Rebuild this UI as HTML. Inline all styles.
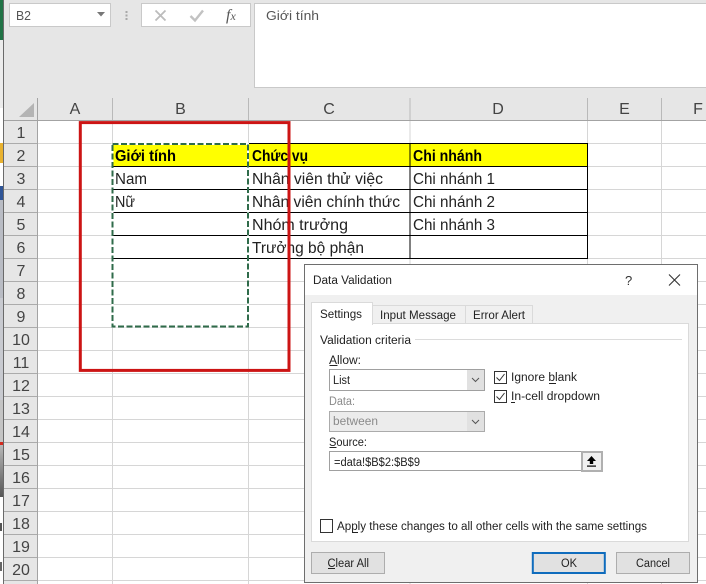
<!DOCTYPE html>
<html><head><meta charset="utf-8"><style>
html,body{margin:0;padding:0;background:#fff}
svg{display:block}
text{font-family:"Liberation Sans",sans-serif;white-space:pre}
.c{font-size:15.5px;fill:#222}
.b{font-size:15.5px;font-weight:bold;fill:#000}
.h{font-size:16px;fill:#444;text-anchor:middle}
.d{font-size:11.5px;fill:#222}
.g{font-size:11.5px;fill:#8a8a8a}
</style></head><body>
<svg width="706" height="584" viewBox="0 0 706 584" xmlns="http://www.w3.org/2000/svg">
<defs><linearGradient id="lg" x1="0" y1="0" x2="0" y2="1"><stop offset="0" stop-color="#b8b8b8"/><stop offset="1" stop-color="#555"/></linearGradient></defs>
<rect width="706" height="584" fill="#fff"/>
<!-- left strip -->
<rect x="0" y="0" width="3" height="40" fill="#217346"/>
<rect x="0" y="40" width="3" height="68" fill="#ececec"/>
<rect x="0" y="108" width="3" height="12" fill="#fff"/>
<rect x="0" y="143" width="3" height="20" fill="#e9b22f"/>
<rect x="0" y="186" width="3" height="14" fill="#2f5597"/>
<rect x="0" y="200" width="3" height="98" fill="#b9bcc4"/>
<rect x="0" y="298" width="3" height="102" fill="#c8cad0"/>
<rect x="0" y="400" width="3" height="42" fill="#c4c4c4"/>
<rect x="0" y="442" width="3" height="3" fill="#d42a1e"/>
<rect x="0" y="445" width="3" height="52" fill="url(#lg)"/>
<rect x="0" y="523" width="2" height="8" fill="#555"/>
<rect x="0" y="562" width="2" height="9" fill="#666"/>
<rect x="3" y="0" width="1" height="584" fill="#6a6a6a"/>
<!-- top ribbon -->
<rect x="4" y="0" width="702" height="120" fill="#e6e6e6"/>
<rect x="9.5" y="3.5" width="101" height="23" fill="#fff" stroke="#c9c9c9"/>
<text x="16" y="20" font-size="12.5" fill="#555" textLength="15" lengthAdjust="spacingAndGlyphs">B2</text>
<path d="M97 12h8l-4 4.5z" fill="#777"/>
<g fill="#a8a8a8"><rect x="125.500" y="11" width="2" height="2"/><rect x="125.500" y="14.500" width="2" height="2"/><rect x="125.500" y="18" width="2" height="2"/></g>
<rect x="141.500" y="3.500" width="109" height="23" fill="#fff" stroke="#c9c9c9"/>
<path d="M155.500 10.500l10 10M165.500 10.500l-10 10" stroke="#bcbcbc" stroke-width="1.800" fill="none"/>
<path d="M190.500 16l4.500 4.500 8-10" stroke="#c2c2c2" stroke-width="2.400" fill="none"/>
<text x="226" y="20" font-size="16" font-style="italic" fill="#555" style="font-family:'Liberation Serif',serif">f<tspan font-size="12">x</tspan></text>
<rect x="254.500" y="3.500" width="460" height="84" fill="#fff" stroke="#c9c9c9"/>
<text x="266" y="20" font-size="12.500" fill="#555" textLength="53" lengthAdjust="spacingAndGlyphs">Giới tính</text>
<!-- corner -->
<path d="M19 117h15v-14z" fill="#b4b4b4"/>
<!-- column header -->
<g stroke="#b9b9b9"><path d="M37.500 98v22M112.500 98v22M248.500 98v22M410 98v22M587.500 98v22M661.500 98v22"/></g>
<rect x="4" y="120" width="702" height="1" fill="#a3a3a3"/>
<text class="h" x="75" y="114">A</text><text class="h" x="180.500" y="114">B</text><text class="h" x="329" y="114">C</text><text class="h" x="498" y="114">D</text><text class="h" x="624.500" y="114">E</text><text class="h" x="698" y="114">F</text>
<!-- row header -->
<rect x="4" y="121" width="33" height="463" fill="#e6e6e6"/>
<rect x="37" y="98" width="1" height="486" fill="#a3a3a3"/>
<g stroke="#ababab"><path d="M4 143.500h33M4 166.500h33M4 189.500h33M4 212.500h33M4 235.500h33M4 258.500h33M4 281.500h33M4 304.500h33M4 327.500h33M4 350.500h33M4 373.500h33M4 396.500h33M4 419.500h33M4 442.500h33M4 465.500h33M4 488.500h33M4 511.500h33M4 534.500h33M4 557.500h33M4 580.500h33"/></g>
<g><text class="h" x="21" y="138">1</text><text class="h" x="21" y="161">2</text><text class="h" x="21" y="184">3</text><text class="h" x="21" y="207">4</text><text class="h" x="21" y="230">5</text><text class="h" x="21" y="253">6</text><text class="h" x="21" y="276">7</text><text class="h" x="21" y="299">8</text><text class="h" x="21" y="322">9</text><text class="h" x="21" y="345">10</text><text class="h" x="21" y="368">11</text><text class="h" x="21" y="391">12</text><text class="h" x="21" y="414">13</text><text class="h" x="21" y="437">14</text><text class="h" x="21" y="460">15</text><text class="h" x="21" y="483">16</text><text class="h" x="21" y="506">17</text><text class="h" x="21" y="529">18</text><text class="h" x="21" y="552">19</text><text class="h" x="21" y="575">20</text></g>
<!-- grid -->
<g stroke="#d6d6d6"><path d="M112.500 121v463M248.500 121v463M410 121v463M587.500 121v463M661.500 121v463"/>
<path d="M38 143.500h668M38 166.500h668M38 189.500h668M38 212.500h668M38 235.500h668M38 258.500h668M38 281.500h668M38 304.500h668M38 327.500h668M38 350.500h668M38 373.500h668M38 396.500h668M38 419.500h668M38 442.500h668M38 465.500h668M38 488.500h668M38 511.500h668M38 534.500h668M38 557.500h668M38 580.500h668"/></g>
<!-- table -->
<rect x="112" y="143" width="476" height="23" fill="#ffff00"/>
<g stroke="#000" stroke-width="1" fill="none"><path d="M112 143.500h476M112 166.500h476M112 189.500h476M112 212.500h476M112 235.500h476M112 258.500h476M112.500 143v116M248.500 143v116M410 143v116M587.500 143v116"/></g>
<text class="b" x="115" y="161" textLength="61" lengthAdjust="spacingAndGlyphs">Giới tính</text>
<text class="b" x="252" y="161" textLength="56" lengthAdjust="spacingAndGlyphs">Chức vụ</text>
<text class="b" x="413" y="161" textLength="69" lengthAdjust="spacingAndGlyphs">Chi nhánh</text>
<text class="c" x="115" y="184" textLength="32" lengthAdjust="spacingAndGlyphs">Nam</text>
<text class="c" x="115" y="207" textLength="20" lengthAdjust="spacingAndGlyphs">Nữ</text>
<text class="c" x="252" y="184" textLength="131" lengthAdjust="spacingAndGlyphs">Nhân viên thử việc</text>
<text class="c" x="252" y="207" textLength="148" lengthAdjust="spacingAndGlyphs">Nhân viên chính thức</text>
<text class="c" x="252" y="230" textLength="96" lengthAdjust="spacingAndGlyphs">Nhóm trưởng</text>
<text class="c" x="252" y="253" textLength="112" lengthAdjust="spacingAndGlyphs">Trưởng bộ phận</text>
<text class="c" x="413" y="184" textLength="82" lengthAdjust="spacingAndGlyphs">Chi nhánh 1</text>
<text class="c" x="413" y="207" textLength="82" lengthAdjust="spacingAndGlyphs">Chi nhánh 2</text>
<text class="c" x="413" y="230" textLength="82" lengthAdjust="spacingAndGlyphs">Chi nhánh 3</text>
<!-- marching ants -->
<rect x="112.500" y="144" width="135.500" height="182.500" fill="none" stroke="#fff" stroke-width="2"/>
<rect x="112.500" y="144" width="135.500" height="182.500" fill="none" stroke="#2f6b4a" stroke-width="2" stroke-dasharray="6 2.500"/>
<!-- red box -->
<rect x="80.300" y="122.600" width="208.700" height="247.800" fill="none" stroke="#cc1414" stroke-width="3"/>
<!-- dialog -->
<rect x="304.500" y="264.500" width="393" height="318" fill="#f0f0f0" stroke="#6e6e6e"/>
<rect x="305" y="265" width="392" height="30" fill="#fff"/>
<text class="d" x="313" y="284" textLength="79" lengthAdjust="spacingAndGlyphs">Data Validation</text>
<text x="625" y="285" font-size="13" fill="#333">?</text>
<path d="M669 274.500l11 11M680 274.500l-11 11" stroke="#333" stroke-width="1.100" fill="none"/>
<!-- tabs -->
<rect x="372.500" y="305.500" width="93" height="19" fill="#f0f0f0" stroke="#dadada"/>
<rect x="465.500" y="305.500" width="67" height="19" fill="#f0f0f0" stroke="#dadada"/>
<rect x="311.500" y="323.500" width="377" height="218" fill="#fff" stroke="#dadada"/>
<rect x="311.500" y="302.500" width="61" height="22" fill="#fff" stroke="#dadada"/>
<rect x="312" y="322" width="60" height="3" fill="#fff"/>
<text class="d" x="320" y="318" textLength="42" lengthAdjust="spacingAndGlyphs">Settings</text>
<text class="d" x="380" y="319" textLength="76" lengthAdjust="spacingAndGlyphs">Input Message</text>
<text class="d" x="473" y="319" textLength="52" lengthAdjust="spacingAndGlyphs">Error Alert</text>
<text class="d" x="320" y="344" textLength="91" lengthAdjust="spacingAndGlyphs">Validation criteria</text>
<path d="M415 339.500h267" stroke="#dcdcdc"/>
<!-- allow -->
<text class="d" x="329" y="364" textLength="32" lengthAdjust="spacingAndGlyphs">Allow:</text>
<path d="M329.500 365.500h8" stroke="#222"/>
<rect x="329.500" y="369.500" width="155" height="21" fill="#fff" stroke="#a0a0a0"/>
<rect x="467" y="370" width="17" height="20" fill="#e1e1e1"/>
<path d="M472 378l3.500 3.500 3.500-3.500" stroke="#555" fill="none"/>
<text class="d" x="333" y="384" textLength="17" lengthAdjust="spacingAndGlyphs">List</text>
<!-- data -->
<text class="g" x="329" y="405" textLength="26" lengthAdjust="spacingAndGlyphs">Data:</text>
<rect x="329.500" y="411.500" width="155" height="20" fill="#ececec" stroke="#ababab"/>
<rect x="467" y="412" width="17" height="19" fill="#e1e1e1"/>
<path d="M472 420l3.500 3.500 3.500-3.500" stroke="#555" fill="none"/>
<text class="g" x="333" y="425" textLength="45" lengthAdjust="spacingAndGlyphs">between</text>
<!-- checkboxes -->
<rect x="494.500" y="371.500" width="12" height="12" fill="#fff" stroke="#333"/>
<path d="M496.500 377.500l3 3 5-6.500" stroke="#333" fill="none"/>
<text class="d" x="511" y="381" textLength="66" lengthAdjust="spacingAndGlyphs">Ignore blank</text>
<path d="M549 383.500h7" stroke="#222"/>
<rect x="494.500" y="390.500" width="12" height="12" fill="#fff" stroke="#333"/>
<path d="M496.500 396.500l3 3 5-6.500" stroke="#333" fill="none"/>
<text class="d" x="511" y="400" textLength="89" lengthAdjust="spacingAndGlyphs">In-cell dropdown</text>
<path d="M511 402.500h4" stroke="#222"/>
<!-- source -->
<text class="d" x="329" y="446" textLength="38" lengthAdjust="spacingAndGlyphs">Source:</text>
<path d="M329.500 447.500h7" stroke="#222"/>
<rect x="329.500" y="451.500" width="252" height="19" fill="#fff" stroke="#a0a0a0"/>
<text class="d" x="334" y="466" textLength="86" lengthAdjust="spacingAndGlyphs">=data!$B$2:$B$9</text>
<rect x="582" y="452" width="20" height="19" fill="#f0f0f0" stroke="#b0b0b0" stroke-width="2"/>
<path d="M591.500 456l4.500 5h-2.800v3h-3.400v-3H587z" fill="#000"/>
<rect x="587" y="465.500" width="9" height="1.200" fill="#000"/>
<!-- apply -->
<rect x="320.500" y="519.500" width="12" height="13" fill="#fff" stroke="#333"/>
<text class="d" x="337" y="530" textLength="310" lengthAdjust="spacingAndGlyphs">Apply these changes to all other cells with the same settings</text>
<path d="M352 532.500h6" stroke="#222"/>
<!-- buttons -->
<rect x="311.500" y="552.500" width="73" height="21" fill="#e1e1e1" stroke="#adadad"/>
<text class="d" x="327.500" y="567" textLength="41.500" lengthAdjust="spacingAndGlyphs">Clear All</text>
<path d="M328 568.500h7" stroke="#222"/>
<rect x="532.800" y="553" width="72" height="20" fill="#e1e1e1" stroke="#0f6cbd" stroke-width="2"/>
<text class="d" x="561" y="567" textLength="16" lengthAdjust="spacingAndGlyphs">OK</text>
<rect x="616.500" y="552.500" width="73" height="21" fill="#e1e1e1" stroke="#adadad"/>
<text class="d" x="636" y="567" textLength="34" lengthAdjust="spacingAndGlyphs">Cancel</text>
</svg>
</body></html>
